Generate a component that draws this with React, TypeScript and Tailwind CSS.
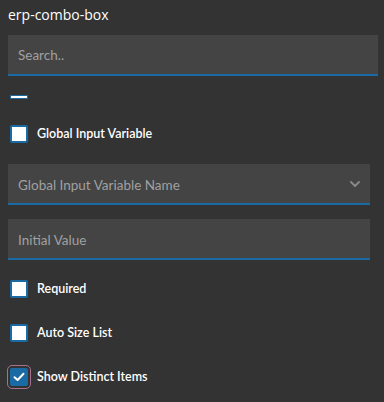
import React from "react";

const checks = [
  { label: "Required", checked: false, mt: "mt-[20px]" },
  { label: "Auto Size List", checked: false, mt: "mt-[26px]" },
];

function Check({ checked, focused }: { checked?: boolean; focused?: boolean }) {
  return (
    <div
      className={`flex h-[18px] w-[18px] shrink-0 items-center justify-center rounded-[2px] border-2 border-[#1a6aa3] ${
        checked ? "bg-[#1a6aa3]" : "bg-white"
      } ${focused ? "outline outline-1 outline-offset-2 outline-[#a8708f]" : ""}`}
    >
      {checked && (
        <svg width="12" height="10" viewBox="0 0 12 10" fill="none">
          <path d="M1.5 5.2L4.6 8L10.5 1.8" stroke="white" strokeWidth="2" strokeLinecap="round" strokeLinejoin="round" />
        </svg>
      )}
    </div>
  );
}

function CheckRow({ label, checked, focused, mt }: { label: string; checked?: boolean; focused?: boolean; mt: string }) {
  return (
    <div className={`${mt} flex h-[18px] items-center gap-[9px] pl-[2px]`}>
      <Check checked={checked} focused={focused} />
      <span className="text-[12.5px] font-semibold leading-[18px] text-white">{label}</span>
    </div>
  );
}

function Field({ placeholder, wide, mt, chevron }: { placeholder: string; wide?: boolean; mt: string; chevron?: boolean }) {
  return (
    <div
      className={`${mt} flex h-[41px] items-center justify-between border-b-2 border-[#1a6aa3] bg-[#444444] pl-[10px] pr-[10px] ${
        wide ? "w-[370px]" : "w-[362px]"
      }`}
    >
      <span className={`text-[13.5px] leading-[20px] text-[#a0a0a0] ${wide ? "" : "pt-[2px]"}`}>{placeholder}</span>
      {chevron && (
        <svg width="10" height="6" viewBox="0 0 10 6" fill="none">
          <path d="M1 1L5 5L9 1" stroke="#8a8a8a" strokeWidth="1.8" strokeLinecap="round" strokeLinejoin="round" />
        </svg>
      )}
    </div>
  );
}

export default function App() {
  return (
    <div className="h-[402px] w-[384px] bg-[#333333] px-[8px] pt-[5px] font-['Lato',sans-serif]">
      <div className="h-[20px] font-['Open_Sans',sans-serif] text-[14px] leading-[20px] text-white">erp-combo-box</div>

      <Field placeholder="Search.." wide mt="mt-[10px]" />

      <div className="ml-[2px] mt-[19px] h-[4px] w-[18px] rounded-[1px] border border-[#1a6aa3] bg-white" />

      <CheckRow label="Global Input Variable" mt="mt-[26px]" />

      <Field placeholder="Global Input Variable Name" mt="mt-[21px]" chevron />

      <Field placeholder="Initial Value" mt="mt-[14px]" />

      {checks.map((c) => (
        <CheckRow key={c.label} label={c.label} checked={c.checked} mt={c.mt} />
      ))}

      <CheckRow label="Show Distinct Items" checked focused mt="mt-[26px]" />
    </div>
  );
}
